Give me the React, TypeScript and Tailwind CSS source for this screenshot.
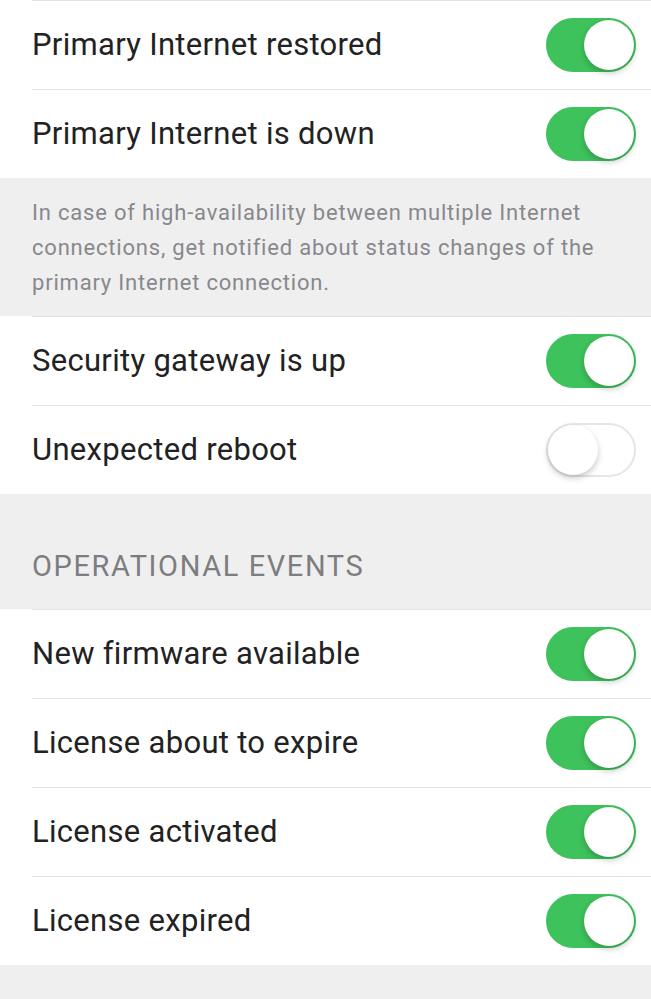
import { useState } from "react";

type Item = { label: string; on: boolean };

const Toggle = ({ on, onChange }: { on: boolean; onChange: () => void }) => {
  return (
    <button
      onClick={onChange}
      className={`relative h-[54px] w-[90px] shrink-0 rounded-full border-2 transition-colors ${
        on ? "border-[#3ec25b] bg-[#3ec25b]" : "border-[#e6e6e6] bg-white"
      }`}
    >
      <span
        className={`absolute top-0 h-[50px] w-[50px] rounded-full bg-white shadow-[0_3px_6px_rgba(0,0,0,0.22)] transition-all ${
          on ? "left-[36px]" : "left-0"
        }`}
      />
    </button>
  );
};

const Row = ({ item, onToggle }: { item: Item; onToggle: () => void }) => {
  return (
    <div className="pl-[32px]">
      <div className="flex h-[89px] items-center justify-between border-t border-[#e3e3e6] pr-[15px]">
        <span className="text-[31px] tracking-[0.3px] text-[#222222]">
          {item.label}
        </span>
        <Toggle on={item.on} onChange={onToggle} />
      </div>
    </div>
  );
};

const Group = ({
  items,
  onToggle,
}: {
  items: Item[];
  onToggle: (i: number) => void;
}) => {
  return (
    <div className="bg-white">
      {items.map((item, i) => (
        <Row key={item.label} item={item} onToggle={() => onToggle(i)} />
      ))}
    </div>
  );
};

export default function App() {
  const [first, setFirst] = useState<Item[]>([
    { label: "Primary Internet restored", on: true },
    { label: "Primary Internet is down", on: true },
  ]);
  const [second, setSecond] = useState<Item[]>([
    { label: "Security gateway is up", on: true },
    { label: "Unexpected reboot", on: false },
  ]);
  const [ops, setOps] = useState<Item[]>([
    { label: "New firmware available", on: true },
    { label: "License about to expire", on: true },
    { label: "License activated", on: true },
    { label: "License expired", on: true },
  ]);

  const flip = (list: Item[], set: (v: Item[]) => void) => (i: number) =>
    set(list.map((it, j) => (j === i ? { ...it, on: !it.on } : it)));

  return (
    <div className="min-h-[999px] w-[651px] bg-[#efeff0] font-['Roboto',sans-serif]">
      <Group items={first} onToggle={flip(first, setFirst)} />
      <p className="px-[32px] pb-[16px] pt-[17px] text-[22px] leading-[35px] tracking-[0.8px] text-[#88888c]">
        In case of high-availability between multiple Internet connections, get
        notified about status changes of the primary Internet connection.
      </p>
      <Group items={second} onToggle={flip(second, setSecond)} />
      <div className="flex h-[115px] items-end px-[32px] pb-[26px]">
        <span className="text-[29px] leading-[34px] tracking-[1.6px] text-[#7d7d80]">
          OPERATIONAL EVENTS
        </span>
      </div>
      <Group items={ops} onToggle={flip(ops, setOps)} />
    </div>
  );
}
